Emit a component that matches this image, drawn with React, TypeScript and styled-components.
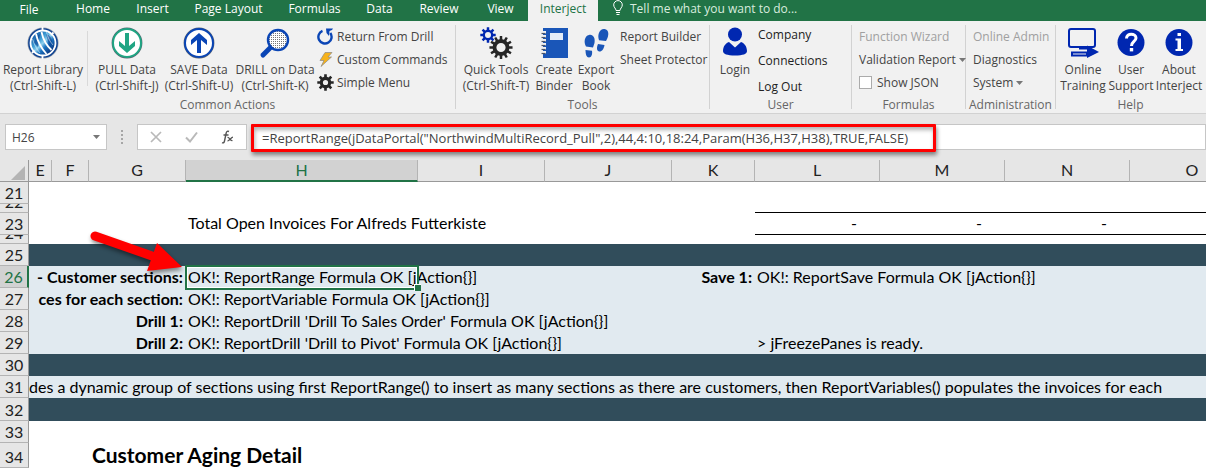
import React from "react";
import styled, { createGlobalStyle, css } from "styled-components";

const UI_FONT = '"Open Sans", "Noto Sans", sans-serif';
const SHEET_FONT = 'Lato, "Open Sans", sans-serif';
const GREEN = "#217346";
const ROYAL = "#0027b0";
const BLUE = "#0a45b5";
const DARK_BAND = "#314d5b";
const LIGHT_BAND = "#e1eaf0";

const GlobalStyle = createGlobalStyle`
  *, *::before, *::after { box-sizing: border-box; }
  body { margin: 0; background: #fff; font-family: ${UI_FONT}; font-size: 12px; color: #444; }
  button, input { font: inherit; color: inherit; margin: 0; }
  svg { display: block; flex: none; }
`;

const Window = styled.div`
  width: 100%;
  overflow: hidden;
`;

/* ---------- Tab strip ---------- */

const TabStrip = styled.nav`
  display: flex;
  height: 21px;
  background: ${GREEN};
`;

const Tab = styled.button<{ $width: number; $active?: boolean }>`
  flex: none;
  width: ${(p) => p.$width}px;
  padding: 0 0 3px;
  border: 0;
  line-height: 18px;
  white-space: nowrap;
  background: ${(p) => (p.$active ? "#f1f1f1" : "transparent")};
  color: ${(p) => (p.$active ? GREEN : "#fff")};
`;

const FileTab = styled(Tab)`
  padding: 1px 0 2px;
  margin-right: 5px;
`;

const TellMe = styled.button`
  display: flex;
  gap: 7px;
  margin-left: 15px;
  padding: 0 0 3px;
  border: 0;
  background: transparent;
  color: #d8ecdf;
  line-height: 18px;
  white-space: nowrap;
`;

/* ---------- Ribbon ---------- */

const Ribbon = styled.div`
  display: flex;
  height: 93px;
  background: #f1f1f1;
  border-bottom: 1px solid #d2d2d2;
`;

const Group = styled.section<{ $width: number; $last?: boolean }>`
  flex: none;
  display: flex;
  flex-direction: column;
  width: ${(p) => p.$width}px;
  height: 84px;
  margin-top: 4px;
  border-right: 1px solid ${(p) => (p.$last ? "transparent" : "#d2d2d2")};
`;

const GroupBody = styled.div<{ $left: number }>`
  flex: none;
  display: flex;
  align-items: flex-start;
  height: 72px;
  padding-left: ${(p) => p.$left}px;
`;

const GroupLabel = styled.h2`
  flex: none;
  margin: 0;
  line-height: 16px;
  font-size: 12px;
  font-weight: 400;
  text-align: center;
  color: #666;
`;

const BigButton = styled.button<{ $width: number }>`
  flex: none;
  display: flex;
  flex-direction: column;
  align-items: center;
  width: ${(p) => p.$width}px;
  padding: 2px 0 0;
  border: 0;
  background: transparent;
  line-height: 16px;
  white-space: nowrap;
  text-align: center;

  svg { margin-bottom: 3px; }
`;

const ShortDivider = styled.span`
  flex: none;
  width: 1px;
  height: 55px;
  margin: 6px 4px 0 1px;
  background: #d9d9d9;
`;

const SmallStack = styled.div<{ $roomy?: boolean; $left: number }>`
  flex: none;
  display: grid;
  grid-auto-rows: ${(p) => (p.$roomy ? 26 : 23)}px;
  justify-items: start;
  margin-top: ${(p) => (p.$roomy ? -4 : 0)}px;
  margin-left: ${(p) => p.$left}px;
  color: ${(p) => (p.$roomy ? "#222" : "inherit")};
`;

const SmallButton = styled.button`
  display: flex;
  align-items: center;
  gap: 3px;
  padding: 0;
  border: 0;
  background: transparent;
  white-space: nowrap;

  &:disabled { color: #a0a0a0; }
`;

const CheckLabel = styled.label`
  display: flex;
  align-items: center;
  gap: 5px;
  white-space: nowrap;
`;

const CheckBox = styled.input`
  appearance: none;
  width: 13px;
  height: 13px;
  border: 1px solid #ababab;
  background: #fff;

  &:checked { background: ${GREEN}; }
`;

/* ---------- Formula bar ---------- */

const FormulaBar = styled.div`
  display: flex;
  height: 46px;
  padding: 10px 0 0 5px;
  background: #e6e6e6;
`;

const boxed = css`
  height: 26px;
  border: 1px solid #c6c6c6;
  background: #fff;
`;

const NameBox = styled.div`
  ${boxed}
  flex: none;
  display: flex;
  align-items: center;
  width: 102px;
  padding: 0 6px;
`;

const NameInput = styled.input`
  flex: 1;
  min-width: 0;
  padding: 0;
  border: 0;
  outline: 0;
  background: transparent;
`;

const Grip = styled.span`
  flex: none;
  display: grid;
  align-content: center;
  justify-content: center;
  gap: 2px;
  width: 30px;
  height: 26px;

  i { width: 2px; height: 2px; background: #a6a6a6; }
`;

const FormulaTools = styled.div`
  ${boxed}
  flex: none;
  display: flex;
  align-items: center;
  justify-content: space-between;
  width: 110px;
  padding: 0 12px;
`;

const IconButton = styled.button`
  padding: 0;
  border: 0;
  background: transparent;
`;

const FormulaField = styled.div`
  position: relative;
  flex: 1;
  min-width: 0;
  margin-left: 4px;
`;

const FormulaInput = styled.input`
  ${boxed}
  width: 100%;
  padding: 2px 0 0 10px;
  outline: 0;
  font-size: 13px;
`;

const RedFrame = styled.span`
  position: absolute;
  top: 0;
  left: 0;
  width: 685px;
  height: 28px;
  border: 3px solid #f00;
  border-radius: 1px;
  box-shadow: 1px 3px 4px rgba(0, 0, 0, 0.45), inset 1px 3px 4px rgba(0, 0, 0, 0.3);
  pointer-events: none;
`;

/* ---------- Worksheet ---------- */

const SheetArea = styled.main`
  position: relative;
  overflow: hidden;
`;

const Sheet = styled.table`
  width: 100%;
  min-width: 1254px;
  table-layout: fixed;
  border-collapse: separate;
  border-spacing: 0;
  font-family: ${SHEET_FONT};
  font-size: 16px;
  color: #000;
`;

const ColHead = styled.th<{ $selected?: boolean }>`
  height: 22px;
  padding: 0;
  border-right: 1px solid #b4b4b4;
  border-bottom: ${(p) => (p.$selected ? `2px solid ${GREEN}` : "1px solid #999")};
  background: ${(p) => (p.$selected ? "#d2d2d2" : "#e6e6e6")};
  color: ${(p) => (p.$selected ? GREEN : "#222")};
  font-weight: 400;
  line-height: 19px;
  vertical-align: top;
`;

const Corner = styled.th`
  padding: 3px 3px 0 10px;
  border-right: 1px solid #999;
  border-bottom: 1px solid #999;
  background: #e6e6e6;
`;

const RowHead = styled.th<{ $selected?: boolean }>`
  padding: 0;
  border-right: ${(p) => (p.$selected ? `2px solid ${GREEN}` : "1px solid #999")};
  border-bottom: 1px solid #b4b4b4;
  background: ${(p) => (p.$selected ? "#d2d2d2" : "#e6e6e6")};
  color: ${(p) => (p.$selected ? GREEN : "#222")};
  font-weight: 400;
`;

const RowNumber = styled.div<{ $height: number }>`
  display: flex;
  align-items: flex-end;
  justify-content: center;
  height: ${(p) => p.$height - 1}px;
  overflow: hidden;
  line-height: 21px;
`;

type Band = "dark" | "light" | "none";

const Row = styled.tr<{ $height: number; $band?: Band }>`
  height: ${(p) => p.$height}px;
  line-height: ${(p) => (p.$band ? 22 : 20)}px;
  background: ${(p) => (p.$band === "dark" ? DARK_BAND : p.$band === "light" ? LIGHT_BAND : "#fff")};
`;

const Cell = styled.td<{ $ruled?: boolean; $bold?: boolean }>`
  position: relative;
  padding: 0 0 0 2px;
  border-bottom: ${(p) => (p.$ruled ? "1px solid #000" : "0")};
  font-weight: ${(p) => (p.$bold ? 700 : 400)};
  vertical-align: top;
  white-space: nowrap;
`;

const NoteCell = styled(Cell)`
  padding-left: 0;
`;

const NumberCell = styled(Cell)`
  padding: 0 23px 0 0;
  text-align: right;
`;

const LabelText = styled.div`
  display: flex;
  justify-content: flex-end;
  overflow: hidden;
  padding-right: 3px;
`;

const SheetTitle = styled.h1`
  margin: 0;
  padding-left: 1px;
  font-size: 21px;
  line-height: 24px;
`;

const Selection = styled.span`
  position: absolute;
  inset: -1px -1px -2px -1px;
  border: 2px solid ${GREEN};
  box-shadow: inset 0 0 0 1px #fff;

  &::after {
    content: "";
    position: absolute;
    right: -4px;
    bottom: -3px;
    width: 7px;
    height: 7px;
    border: 1px solid #fff;
    border-right: 0;
    border-bottom: 0;
    background: ${GREEN};
  }
`;

const Pointer = styled.svg`
  position: absolute;
  top: 66px;
  left: 84px;
  filter: drop-shadow(1px 3px 2px rgba(0, 0, 0, 0.45));
`;

/* ---------- Icons ---------- */

function gearPath(cx: number, cy: number, teeth: number, outer: number, inner: number, hole: number) {
  const step = (Math.PI * 2) / teeth;
  const points: string[] = [];
  for (let i = 0; i < teeth; i++) {
    const a = i * step;
    const corners: [number, number][] = [
      [a - step * 0.3, inner],
      [a - step * 0.2, outer],
      [a + step * 0.2, outer],
      [a + step * 0.3, inner],
    ];
    corners.forEach(([angle, r]) =>
      points.push(`${(cx + Math.sin(angle) * r).toFixed(2)} ${(cy - Math.cos(angle) * r).toFixed(2)}`)
    );
  }
  return `M${points.join("L")}ZM${cx - hole} ${cy}a${hole} ${hole} 0 1 0 ${hole * 2} 0a${hole} ${hole} 0 1 0 ${-hole * 2} 0Z`;
}

const GlobeIcon = () => (
  <svg width="32" height="32" viewBox="0 0 32 32">
    <defs>
      <linearGradient id="globe" x1="0.1" y1="0.1" x2="0.9" y2="0.9">
        <stop offset="0" stopColor="#0b4a9c" />
        <stop offset="0.35" stopColor="#3f9fd6" />
        <stop offset="0.5" stopColor="#8fd0ee" />
        <stop offset="0.65" stopColor="#1c74c0" />
        <stop offset="1" stopColor="#06246e" />
      </linearGradient>
    </defs>
    <circle cx="16" cy="16" r="15.500" fill="#8a97a8" />
    <circle cx="16" cy="16" r="14.800" fill="#0a3f92" />
    <circle cx="16" cy="16" r="12.500" fill="url(#globe)" stroke="#fff" strokeWidth="1.800" />
    <path d="M7 16c1-5 3-8 6-9l-2 13ZM19 7c4 1 6 4 6 9l-2 6Z" fill="#0a3f92" opacity="0.6" />
    <g fill="none" stroke="#fff">
      <path d="M9 7c1.500 7 5 14 10.500 20" strokeWidth="1.800" />
      <path d="M14.500 5c1.500 7 4.500 13 10 18" strokeWidth="1.800" />
      <path d="M19.500 5c1 5 3 9 6.500 13M5.500 12c1.500 5 4 10 7.500 14" strokeWidth="0.700" opacity="0.7" />
      <path d="M15.500 0v4M15.500 28v4M26.500 5.500l-2.500 2.500M5 26l2.500-2.500" strokeWidth="1.800" />
    </g>
  </svg>
);

const CircleArrowIcon = ({ color, up }: { color: string; up?: boolean }) => (
  <svg width="32" height="32" viewBox="0 0 32 32">
    <circle cx="16" cy="16" r="15.4" fill="#5b6470" />
    <circle cx="16" cy="16" r="14" fill="#fff" stroke={color} strokeWidth="2" />
    <path
      transform={up ? "rotate(180 16 16)" : undefined}
      d="M14 6h4v13l6-5v5l-8 7-8-7v-5l6 5Z"
      fill={color}
    />
  </svg>
);

const DrillIcon = () => (
  <svg width="32" height="32" viewBox="0 0 32 32">
    <defs>
      <pattern id="dots" width="2" height="2" patternUnits="userSpaceOnUse">
        <rect width="2" height="2" fill="#fff" />
        <rect width="1" height="1" fill="#777" />
      </pattern>
    </defs>
    <path d="M12.500 19.500L4 28" stroke={BLUE} strokeWidth="5" strokeLinecap="round" />
    <circle cx="19" cy="13" r="10" fill="url(#dots)" stroke={BLUE} strokeWidth="2.400" />
  </svg>
);

const ReturnIcon = () => (
  <svg width="17" height="17" viewBox="0 0 17 17">
    <path d="M5.500 2.800A6.600 6.600 0 1 0 13.300 5" fill="none" stroke={BLUE} strokeWidth="2.400" />
    <path d="M9 .5h7l-1 1.500-2.500 1L12 8 9.500 5Z" fill={BLUE} />
  </svg>
);

const BoltIcon = () => (
  <svg width="17" height="17" viewBox="0 0 17 17">
    <path d="M8 1.500h7L11 6h3.500L4 15.500l3-6H3Z" fill="#f6b21b" stroke="#8a8a8a" strokeWidth="0.700" />
  </svg>
);

const GearIcon = () => (
  <svg width="17" height="17" viewBox="0 0 17 17">
    <path d={gearPath(8.5, 8.5, 8, 8.3, 5.8, 2.6)} fill="#262626" fillRule="evenodd" />
  </svg>
);

const GearsIcon = () => (
  <svg width="34" height="32" viewBox="0 0 34 32">
    <path d={gearPath(9, 8, 8, 7.8, 5.4, 3)} fill={ROYAL} fillRule="evenodd" />
    <path d={gearPath(22, 20.5, 12, 11.6, 8.4, 4.6)} fill="#262626" fillRule="evenodd" />
  </svg>
);

const BinderIcon = () => (
  <svg width="32" height="32" viewBox="0 0 32 32">
    <rect x="5" y="1" width="25" height="30" fill="#1a56b8" />
    <rect x="12" y="6" width="13" height="7" fill="#e4ecf7" />
    {[4, 8, 12, 16, 20, 24].map((y) => (
      <g key={y}>
        <rect x="3" y={y} width="5" height="2.600" fill="#f1f1f1" />
        <path d={`M3.500 ${y + 2.5}h4`} stroke="#4a5568" strokeWidth="1.200" />
      </g>
    ))}
  </svg>
);

const FootprintsIcon = () => (
  <svg width="32" height="32" viewBox="0 0 32 32" fill="#1a56b8">
    <path d="M9 8c4-1 6.500 3 5.500 8l-1.500 4.500-7-1C3.500 15 4.500 9 9 8Z" />
    <path d="M5.500 23l6.500.800c.600 4-.8 6.700-3 6.700-2.500 0-3.500-3-3.500-7.500Z" />
    <path d="M24.500 2c4.500.5 5 6 1.500 12l-7-.8C17 8 19.500 1.500 24.500 2Z" />
    <path d="M18 17l6.500 1c-.5 4-3 7-5.500 6.500-2.500-.7-2.500-4-1-7.500Z" />
  </svg>
);

const PersonIcon = () => (
  <svg width="32" height="32" viewBox="0 0 32 32" fill={ROYAL}>
    <circle cx="16" cy="7.500" r="7" />
    <path d="M10 15l6 5.500 6-5.500c3.500 1.500 5.800 4 6 9 0 3-4 4.500-12 4.500S4 27 4 24c.2-5 2.500-7.500 6-9Z" />
  </svg>
);

const TrainingIcon = () => (
  <svg width="32" height="32" viewBox="0 0 32 32">
    <rect x="2" y="2" width="26" height="18" rx="2" fill="none" stroke={ROYAL} strokeWidth="2" />
    <path d="M12 21.500h9M5 25.500h15v3H5Z" fill="none" stroke={ROYAL} strokeWidth="2" />
    <path d="M20 18.500L32 25l-12 6Z" fill={ROYAL} />
  </svg>
);

const HelpIcon = () => (
  <svg width="32" height="32" viewBox="0 0 32 32">
    <circle cx="16" cy="15.500" r="13.500" fill={ROYAL} />
    <path d="M11.500 11.500c0-6 9.500-5.500 9.500-.5 0 3.500-4.500 3.500-4.500 8" fill="none" stroke="#fff" strokeWidth="3" />
    <rect x="14.800" y="21" width="3.400" height="3.400" fill="#fff" />
  </svg>
);

const InfoIcon = () => (
  <svg width="32" height="32" viewBox="0 0 32 32">
    <circle cx="16" cy="15.500" r="13.500" fill={ROYAL} />
    <path d="M14.500 6h3.500v3h-3.500ZM12.500 11.500H18V22h2v2h-7.500v-2h2v-8.500h-2Z" fill="#fff" />
  </svg>
);

const BulbIcon = () => (
  <svg width="10" height="16" viewBox="0 0 10 16" fill="none" stroke="#fff">
    <path d="M3 10.500C3 8.500.7 7.500.7 4.900A4.300 4.300 0 0 1 9.300 4.900C9.300 7.500 7 8.500 7 10.500Z" />
    <path d="M3 12.500h4M3.500 14.500h3" />
  </svg>
);

const Caret = ({ color = "#777" }: { color?: string }) => (
  <svg width="7" height="4" viewBox="0 0 7 4">
    <path d="M0 0h7L3.500 4Z" fill={color} />
  </svg>
);

/* ---------- Data ---------- */

const tabs: { label: string; width: number; active?: boolean }[] = [
  { label: "Home", width: 60 },
  { label: "Insert", width: 59 },
  { label: "Page Layout", width: 93 },
  { label: "Formulas", width: 79 },
  { label: "Data", width: 51 },
  { label: "Review", width: 68 },
  { label: "View", width: 55 },
  { label: "Interject", width: 70, active: true },
];

const columns: { name: string; width: number }[] = [
  { name: "E", width: 23 },
  { name: "F", width: 37 },
  { name: "G", width: 97 },
  { name: "H", width: 232 },
  { name: "I", width: 127 },
  { name: "J", width: 127 },
  { name: "K", width: 83 },
  { name: "L", width: 125 },
  { name: "M", width: 125 },
  { name: "N", width: 125 },
  { name: "O", width: 125 },
];

interface SheetRow {
  id: number;
  height: number;
  band?: Band;
  label?: string;
  value?: string;
  sideLabel?: string;
  sideValue?: string;
  amounts?: string[];
  ruled?: boolean;
  selected?: boolean;
  note?: string;
  title?: string;
}

const rows: SheetRow[] = [
  { id: 21, height: 22 },
  { id: 22, height: 9, ruled: true },
  { id: 23, height: 22, ruled: true, value: "Total Open Invoices For Alfreds Futterkiste", amounts: ["-", "-", "-"] },
  { id: 24, height: 9 },
  { id: 25, height: 22, band: "dark" },
  {
    id: 26,
    height: 22,
    band: "light",
    selected: true,
    label: "- Customer sections:",
    value: "OK!: ReportRange Formula OK [jAction{}]",
    sideLabel: "Save 1:",
    sideValue: "OK!: ReportSave Formula OK [jAction{}]",
  },
  { id: 27, height: 22, band: "light", label: "ces for each section:", value: "OK!: ReportVariable Formula OK [jAction{}]" },
  { id: 28, height: 22, band: "light", label: "Drill 1:", value: "OK!: ReportDrill 'Drill To Sales Order' Formula OK [jAction{}]" },
  {
    id: 29,
    height: 22,
    band: "light",
    label: "Drill 2:",
    value: "OK!: ReportDrill 'Drill to Pivot' Formula OK [jAction{}]",
    sideValue: "> jFreezePanes is ready.",
  },
  { id: 30, height: 22, band: "dark" },
  {
    id: 31,
    height: 22,
    band: "light",
    note: "des a dynamic group of sections using first ReportRange() to insert as many sections as there are customers, then ReportVariables() populates the invoices for each",
  },
  { id: 32, height: 23, band: "dark" },
  { id: 33, height: 22 },
  { id: 34, height: 25, title: "Customer Aging Detail" },
];

function RowCells({ row }: { row: SheetRow }) {
  if (row.note) {
    return <NoteCell colSpan={12}>{row.note}</NoteCell>;
  }
  if (row.title) {
    return (
      <>
        <Cell colSpan={2} />
        <Cell colSpan={10}>
          <SheetTitle>{row.title}</SheetTitle>
        </Cell>
      </>
    );
  }
  return (
    <>
      <Cell colSpan={3} $bold>
        {row.label && <LabelText>{row.label}</LabelText>}
      </Cell>
      <Cell>
        {row.value}
        {row.selected && <Selection />}
      </Cell>
      <Cell />
      <Cell />
      <Cell $bold>{row.sideLabel && <LabelText>{row.sideLabel}</LabelText>}</Cell>
      {row.amounts ? (
        row.amounts.map((amount, i) => (
          <NumberCell key={i} $ruled>
            {amount}
          </NumberCell>
        ))
      ) : (
        <>
          <Cell $ruled={row.ruled}>{row.sideValue}</Cell>
          <Cell $ruled={row.ruled} />
          <Cell $ruled={row.ruled} />
        </>
      )}
      <Cell $ruled={row.ruled} />
      <Cell />
    </>
  );
}

export default function App() {
  return (
    <Window>
      <GlobalStyle />
      <TabStrip>
        <FileTab $width={58}>File</FileTab>
        {tabs.map((tab) => (
          <Tab key={tab.label} $width={tab.width} $active={tab.active}>
            {tab.label}
          </Tab>
        ))}
        <TellMe>
          <BulbIcon />
          Tell me what you want to do...
        </TellMe>
      </TabStrip>

      <Ribbon>
        <Group $width={456}>
          <GroupBody $left={0}>
            <BigButton $width={86}>
              <GlobeIcon />
              Report Library
              <br />
              (Ctrl-Shift-L)
            </BigButton>
            <ShortDivider />
            <BigButton $width={70}>
              <CircleArrowIcon color="#1fa583" />
              PULL Data
              <br />
              (Ctrl-Shift-J)
            </BigButton>
            <BigButton $width={74}>
              <CircleArrowIcon color={BLUE} up />
              SAVE Data
              <br />
              (Ctrl-Shift-U)
            </BigButton>
            <BigButton $width={78}>
              <DrillIcon />
              DRILL on Data
              <br />
              (Ctrl-Shift-K)
            </BigButton>
            <SmallStack $left={3}>
              <SmallButton><ReturnIcon />Return From Drill</SmallButton>
              <SmallButton><BoltIcon />Custom Commands</SmallButton>
              <SmallButton><GearIcon />Simple Menu</SmallButton>
            </SmallStack>
          </GroupBody>
          <GroupLabel>Common Actions</GroupLabel>
        </Group>

        <Group $width={254}>
          <GroupBody $left={4}>
            <BigButton $width={72}>
              <GearsIcon />
              Quick Tools
              <br />
              (Ctrl-Shift-T)
            </BigButton>
            <BigButton $width={44}>
              <BinderIcon />
              Create
              <br />
              Binder
            </BigButton>
            <BigButton $width={40}>
              <FootprintsIcon />
              Export
              <br />
              Book
            </BigButton>
            <SmallStack $left={4}>
              <SmallButton>Report Builder</SmallButton>
              <SmallButton>Sheet Protector</SmallButton>
            </SmallStack>
          </GroupBody>
          <GroupLabel>Tools</GroupLabel>
        </Group>

        <Group $width={142}>
          <GroupBody $left={5}>
            <BigButton $width={40}>
              <PersonIcon />
              Login
            </BigButton>
            <SmallStack $roomy $left={3}>
              <SmallButton>Company</SmallButton>
              <SmallButton>Connections</SmallButton>
              <SmallButton>Log Out</SmallButton>
            </SmallStack>
          </GroupBody>
          <GroupLabel>User</GroupLabel>
        </Group>

        <Group $width={114}>
          <GroupBody $left={7}>
            <SmallStack $left={0}>
              <SmallButton disabled>Function Wizard</SmallButton>
              <SmallButton>Validation Report<Caret /></SmallButton>
              <CheckLabel>
                <CheckBox type="checkbox" />
                Show JSON
              </CheckLabel>
            </SmallStack>
          </GroupBody>
          <GroupLabel>Formulas</GroupLabel>
        </Group>

        <Group $width={90}>
          <GroupBody $left={7}>
            <SmallStack $left={0}>
              <SmallButton disabled>Online Admin</SmallButton>
              <SmallButton>Diagnostics</SmallButton>
              <SmallButton>System<Caret /></SmallButton>
            </SmallStack>
          </GroupBody>
          <GroupLabel>Administration</GroupLabel>
        </Group>

        <Group $width={150} $last>
          <GroupBody $left={3}>
            <BigButton $width={48}>
              <TrainingIcon />
              Online
              <br />
              Training
            </BigButton>
            <BigButton $width={48}>
              <HelpIcon />
              User
              <br />
              Support
            </BigButton>
            <BigButton $width={48}>
              <InfoIcon />
              About
              <br />
              Interject
            </BigButton>
          </GroupBody>
          <GroupLabel>Help</GroupLabel>
        </Group>
      </Ribbon>

      <FormulaBar>
        <NameBox>
          <NameInput aria-label="Name box" defaultValue="H26" />
          <Caret />
        </NameBox>
        <Grip aria-hidden="true">
          <i />
          <i />
          <i />
          <i />
        </Grip>
        <FormulaTools>
          <IconButton aria-label="Cancel">
            <svg width="12" height="12" viewBox="0 0 12 12">
              <path d="M1 1l10 10M11 1L1 11" stroke="#b9b9b9" strokeWidth="1.700" />
            </svg>
          </IconButton>
          <IconButton aria-label="Enter">
            <svg width="13" height="12" viewBox="0 0 13 12">
              <path d="M1 6.500l4 4 7-9" fill="none" stroke="#b9b9b9" strokeWidth="2" />
            </svg>
          </IconButton>
          <IconButton aria-label="Insert function">
            <svg width="13" height="14" viewBox="0 0 13 14" fill="none" stroke="#555">
              <path d="M8 1.500C6 .5 5.300 2 5 4L3.500 11c-.3 1.500-1 2.300-2.500 1.700M2.500 5h5" strokeWidth="1.400" />
              <path d="M6.500 7.500c2-.8 2.500 4 5 3M12 7.200c-2 0-3.500 3.800-5.500 3.600" strokeWidth="1.300" />
            </svg>
          </IconButton>
        </FormulaTools>
        <FormulaField>
          <FormulaInput
            aria-label="Formula"
            defaultValue={'=ReportRange(jDataPortal("NorthwindMultiRecord_Pull",2),44,4:10,18:24,Param(H36,H37,H38),TRUE,FALSE)'}
          />
          <RedFrame />
        </FormulaField>
      </FormulaBar>

      <SheetArea>
        <Sheet>
          <colgroup>
            <col width={29} />
            {columns.map((c) => (
              <col key={c.name} width={c.width} />
            ))}
            <col />
          </colgroup>
          <thead>
            <tr>
              <Corner aria-label="Select all">
                <svg width="15" height="15" viewBox="0 0 15 15">
                  <path d="M15 1v14H1Z" fill="#b4b4b4" />
                </svg>
              </Corner>
              {columns.map((c) => (
                <ColHead key={c.name} scope="col" $selected={c.name === "H"}>
                  {c.name}
                </ColHead>
              ))}
              <ColHead />
            </tr>
          </thead>
          <tbody>
            {rows.map((row) => (
              <Row key={row.id} $height={row.height} $band={row.band}>
                <RowHead scope="row" $selected={row.selected}>
                  <RowNumber $height={row.height}>{row.id}</RowNumber>
                </RowHead>
                <RowCells row={row} />
              </Row>
            ))}
          </tbody>
        </Sheet>
        <Pointer width="104" height="52" viewBox="0 0 104 52" aria-hidden="true">
          <path d="M11 10L68 30" stroke="#f00" strokeWidth="9" strokeLinecap="round" />
          <path d="M73 17L98 41L63 45Z" fill="#f00" />
        </Pointer>
      </SheetArea>
    </Window>
  );
}
